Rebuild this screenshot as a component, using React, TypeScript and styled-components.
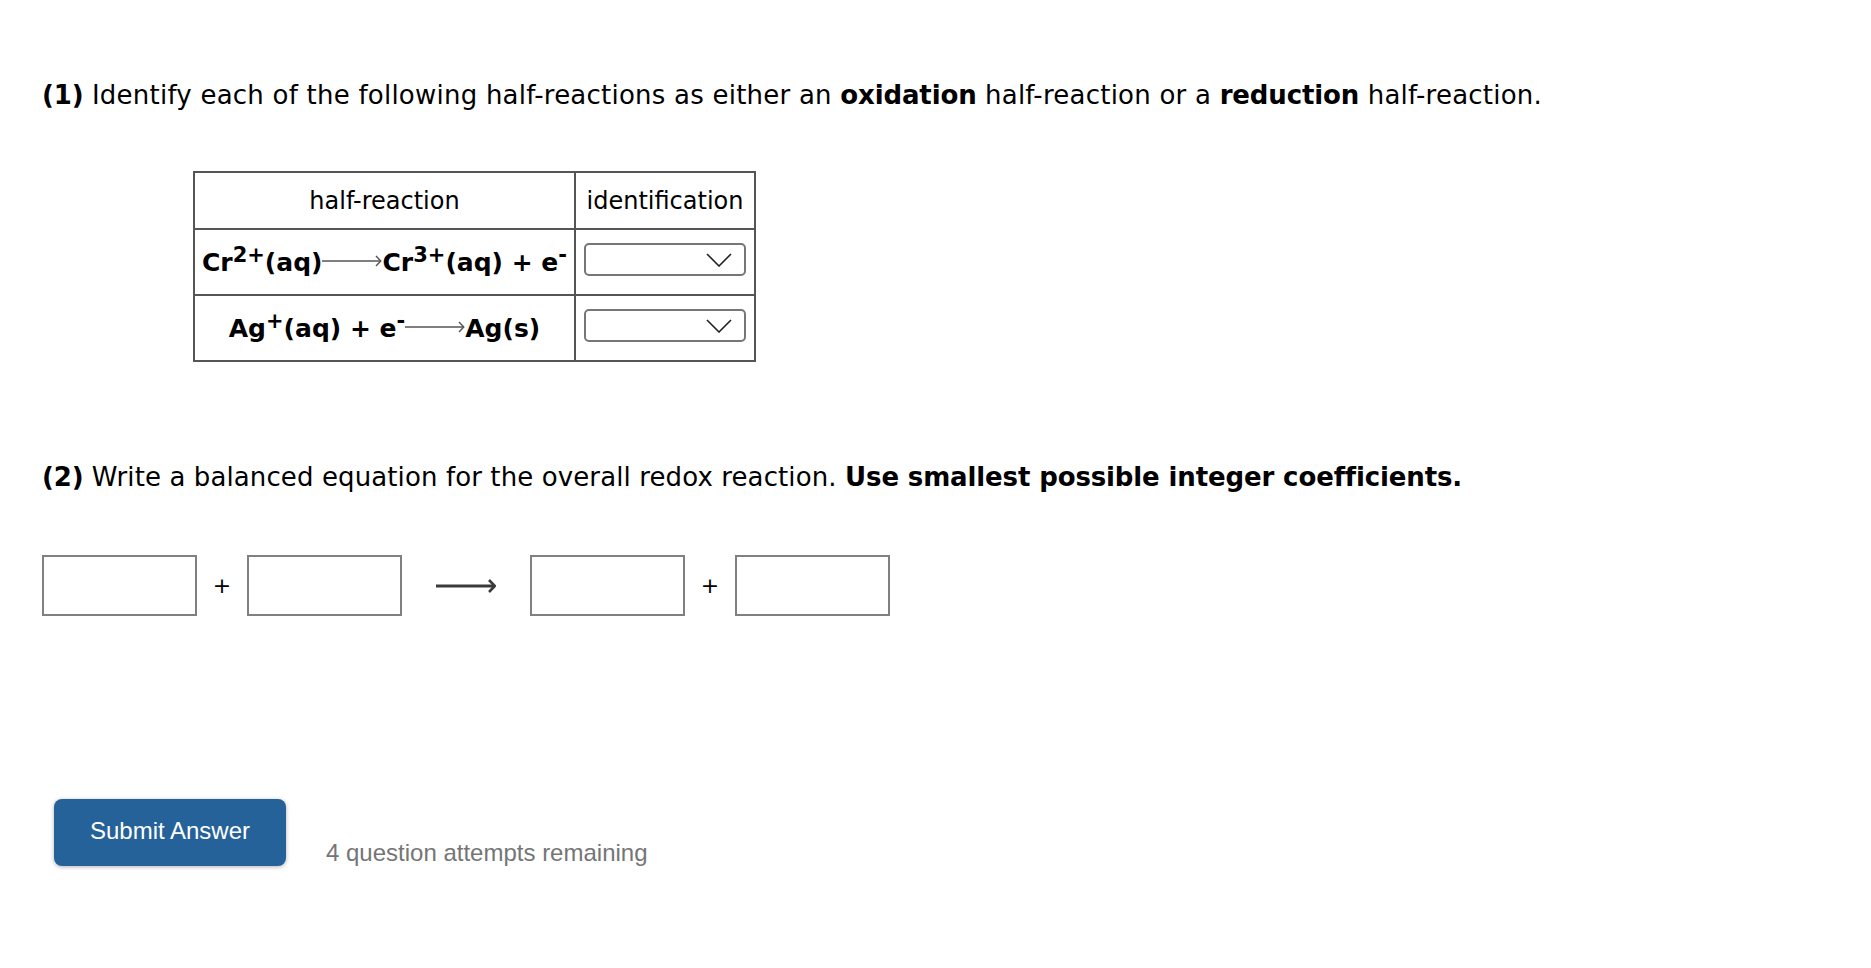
import * as React from 'react';
import styled, { createGlobalStyle } from 'styled-components';

const GlobalStyle = createGlobalStyle`
  body {
    margin: 0;
    background: #ffffff;
    color: #000000;
    font-family: "DejaVu Sans", Verdana, sans-serif;
  }
`;

type ArrowProps = { width: number; stroke: number; head: number; color: string };

// long reaction arrow with an open head
const Arrow = ({ width, stroke, head, color }: ArrowProps) => {
    const h = head * 2 + 4;
    const mid = h / 2;
    return (
        <ArrowSvg width={width} height={h} viewBox={`0 0 ${width} ${h}`}>
            <line x1={0} y1={mid} x2={width - 1.5} y2={mid} stroke={color} strokeWidth={stroke} />
            <polyline
                points={`${width - head - 1},${mid - head} ${width - 1.2},${mid} ${width - head - 1},${mid + head}`}
                fill="none"
                stroke={color}
                strokeWidth={stroke * 0.9}
                strokeLinejoin="round"
            />
        </ArrowSvg>
    );
};

const Chevron = () => (
    <svg width="26" height="14" viewBox="0 0 26 14">
        <polyline points="1,1 13,13 25,1" fill="none" stroke="#222" strokeWidth="1.6" />
    </svg>
);

const Select = () => (
    <SelectBox>
        <Chevron />
    </SelectBox>
);

type Species = { text: string; sup?: string };

// each side of a half-reaction: list of species joined by " + "
const reactions: Array<{ key: string; left: Species[]; right: Species[] }> = [
    {
        key: 'cr',
        left: [{ text: 'Cr', sup: '2+' }],
        right: [{ text: 'Cr', sup: '3+' }, { text: 'e', sup: '-' }],
    },
    {
        key: 'ag',
        left: [{ text: 'Ag', sup: '+' }, { text: 'e', sup: '-' }],
        right: [{ text: 'Ag' }],
    },
];

const phase = (s: Species) => s.text === 'e' ? '' : (s.text === 'Ag' && !s.sup ? '(s)' : '(aq)');

const Side = ({ list }: { list: Species[] }) => (
    <>
        {list.map((s, i) =>
            <React.Fragment key={i}>
                {i > 0 && ' + '}
                {s.text}{s.sup && <Sup>{s.sup}</Sup>}{phase(s)}
            </React.Fragment>
        )}
    </>
);

const App = () => {
    return (
        <Page>
            <GlobalStyle />
            <Question>
                <Strong>(1)</Strong> Identify each of the following half-reactions as either an <Strong>oxidation</Strong> half-reaction or a <Strong>reduction</Strong> half-reaction.
            </Question>

            <Table>
                <thead>
                    <tr>
                        <Th>half-reaction</Th>
                        <Th>identification</Th>
                    </tr>
                </thead>
                <tbody>
                    {reactions.map(r =>
                        <tr key={r.key}>
                            <ReactionCell>
                                <Side list={r.left} />
                                <Arrow width={60} stroke={1.6} head={5} color="#555" />
                                <Side list={r.right} />
                            </ReactionCell>
                            <SelectCell>
                                <Select />
                            </SelectCell>
                        </tr>
                    )}
                </tbody>
            </Table>

            <Question2>
                <Strong>(2)</Strong> Write a balanced equation for the overall redox reaction. <Strong>Use smallest possible integer coefficients.</Strong>
            </Question2>

            <Equation>
                <AnswerBox />
                <Plus>+</Plus>
                <AnswerBox />
                <EqArrow>
                    <Arrow width={60} stroke={2.8} head={6} color="#3a3a3a" />
                </EqArrow>
                <AnswerBox />
                <Plus>+</Plus>
                <AnswerBox />
            </Equation>

            <Footer>
                <SubmitButton>Submit Answer</SubmitButton>
                <Attempts>4 question attempts remaining</Attempts>
            </Footer>
        </Page>
    )
}

export default App

const Page = styled.div`
  padding: 80px 0 0 42px;
  min-height: 968px;
  box-sizing: border-box;
`;
const Question = styled.p`
  margin: 0;
  font-size: 26px;
  line-height: 30px;
  letter-spacing: 0.23px;
`;
const Strong = styled.b`
  font-weight: bold;
  letter-spacing: -0.13px;
`;
const Question2 = styled(Question)`
  margin-top: 100px;
  letter-spacing: 0.11px;
`;
const Table = styled.table`
  margin: 61px 0 0 151px;
  border-collapse: collapse;
  border: 2px solid #555;
  font-size: 24px;
`;
const Th = styled.th`
  border: 2px solid #555;
  font-weight: normal;
  height: 57px;
  padding: 0 10px;
  box-sizing: border-box;
  &:first-child { width: 381px; }
`;
const ReactionCell = styled.td`
  border: 2px solid #555;
  height: 64px;
  padding: 0 4px;
  font-size: 25px;
  font-weight: bold;
  text-align: center;
  white-space: nowrap;
  vertical-align: middle;
`;
const SelectCell = styled.td`
  border: 2px solid #555;
  padding: 0 8px;
  vertical-align: middle;
`;
const Sup = styled.sup`
  font-size: 0.84em;
  line-height: 0;
  vertical-align: 0.42em;
`;
const ArrowSvg = styled.svg`
  display: inline-block;
  vertical-align: 0.12em;
`;
const SelectBox = styled.div`
  width: 162px;
  height: 33px;
  box-sizing: border-box;
  border: 2px solid #767676;
  border-radius: 5px;
  background: #fff;
  display: flex;
  align-items: center;
  justify-content: flex-end;
  padding-right: 12px;
  margin-top: -5px;
`;
const Equation = styled.div`
  display: flex;
  align-items: center;
  margin-top: 63px;
`;
const AnswerBox = styled.div`
  width: 155px;
  height: 61px;
  box-sizing: border-box;
  border: 2px solid #808080;
`;
const Plus = styled.span`
  font-size: 22px;
  width: 50px;
  text-align: center;
`;
const EqArrow = styled.div`
  display: flex;
  padding: 0 34px;
`;
const Footer = styled.div`
  display: flex;
  align-items: flex-start;
  margin: 183px 0 0 12px;
  font-family: "Liberation Sans", Arial, sans-serif;
`;
const SubmitButton = styled.button`
  width: 232px;
  height: 67px;
  background: #256299;
  color: #fff;
  border: none;
  border-radius: 8px;
  font-family: "Liberation Sans", Arial, sans-serif;
  font-size: 24px;
  box-shadow: 0 1px 4px rgba(0, 0, 0, 0.3);
  padding: 0 0 4px;
`;
const Attempts = styled.span`
  margin: 40px 0 0 40px;
  font-size: 24px;
  color: #757575;
`;
